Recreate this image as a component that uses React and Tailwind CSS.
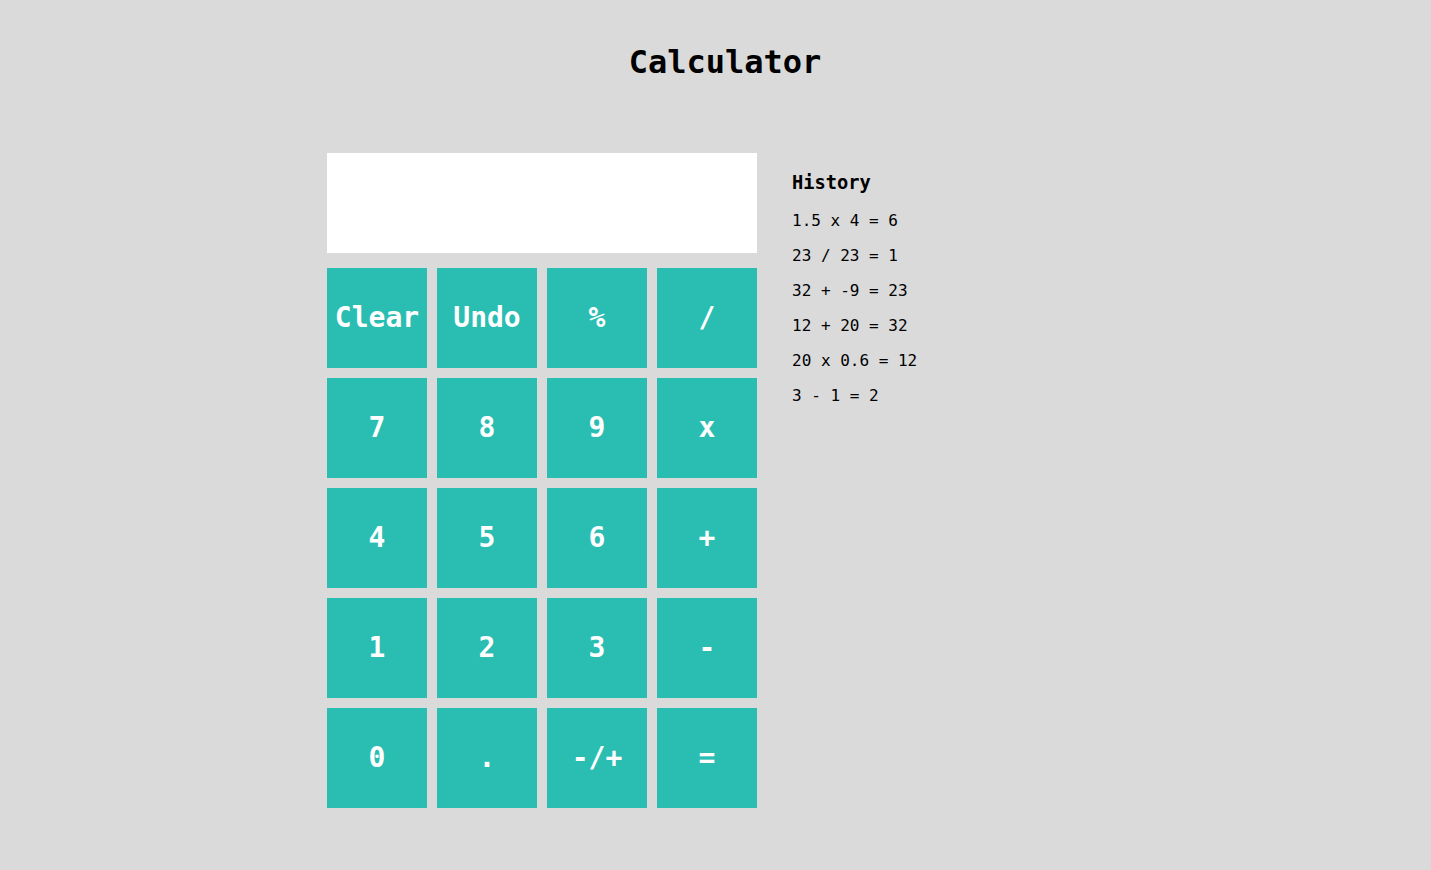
import React, { useState } from "react";

const keys = [
  "Clear", "Undo", "%", "/",
  "7", "8", "9", "x",
  "4", "5", "6", "+",
  "1", "2", "3", "-",
  "0", ".", "-/+", "=",
];

const history = [
  "1.5 x 4 = 6",
  "23 / 23 = 1",
  "32 + -9 = 23",
  "12 + 20 = 32",
  "20 x 0.6 = 12",
  "3 - 1 = 2",
];

function App() {
  const [display, setDisplay] = useState("");

  return (
    <div
      className="min-h-screen w-full bg-[#dadada] text-black"
      style={{ fontFamily: '"DejaVu Sans Mono", "Liberation Mono", monospace' }}
    >
      <h1 className="pt-[42px] pl-[19px] text-center text-[32px] font-bold leading-[40px]">
        Calculator
      </h1>

      <div className="mt-[71px] flex pl-[327px]">
        <div className="flex w-[430px] flex-col">
          <div className="h-[100px] w-[430px] bg-white px-4 text-right text-[32px] leading-[100px]">
            {display}
          </div>
          <div className="mt-[15px] grid grid-cols-4 gap-[10px]">
            {keys.map((k) => (
              <button
                key={k}
                onClick={() => setDisplay(display)}
                className="flex h-[100px] w-[100px] items-center justify-center bg-[#2abdb2] text-[28px] font-bold text-white"
              >
                {k}
              </button>
            ))}
          </div>
        </div>

        <div className="ml-[35px] pt-[18px]">
          <h3 className="text-[18.72px] font-bold leading-[24px]">History</h3>
          <div className="mt-[8px]">
            {history.map((h) => (
              <div key={h} className="text-[16px] leading-[35px] whitespace-pre">
                {h}
              </div>
            ))}
          </div>
        </div>
      </div>
    </div>
  );
}

export default App;
